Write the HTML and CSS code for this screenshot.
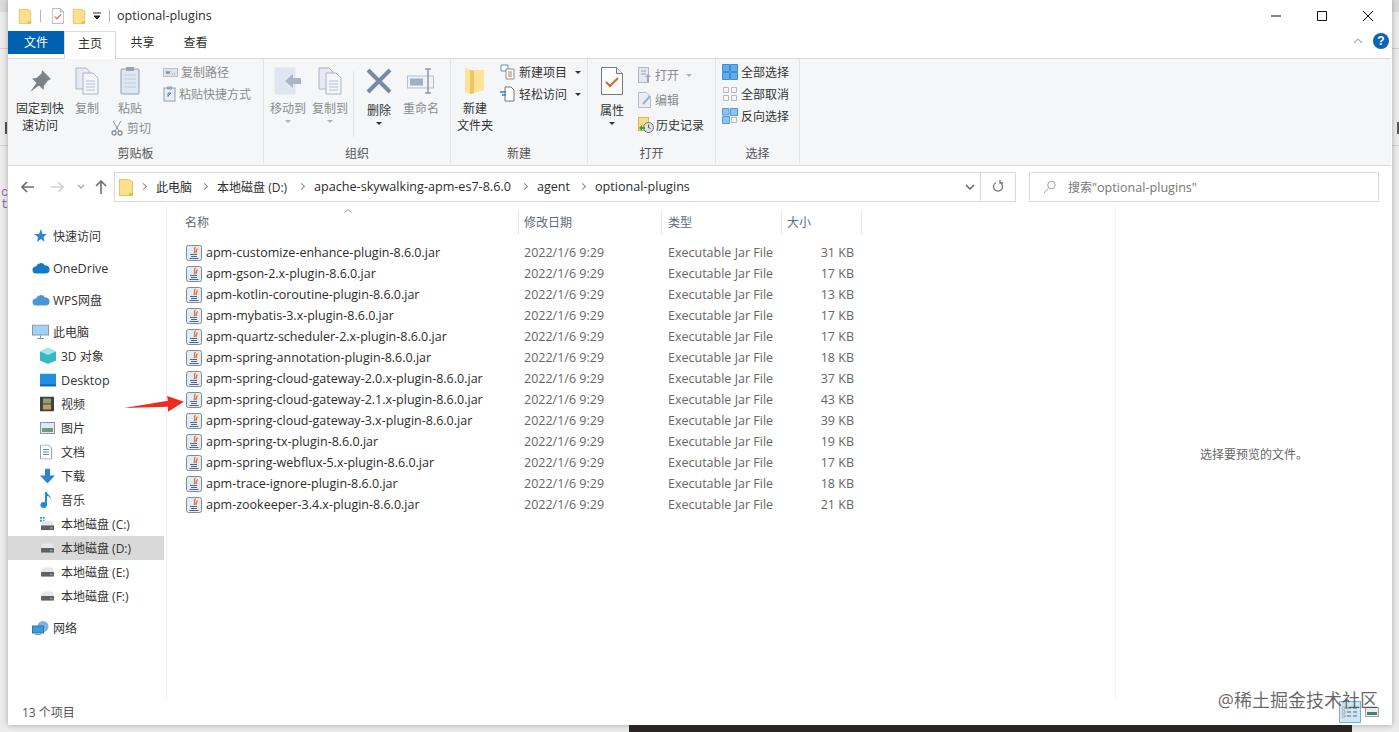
FILE: index.html
```html
<!DOCTYPE html>
<html lang="zh-CN">
<head>
  <meta charset="UTF-8" />
  <title>optional-plugins</title>
  <link rel="stylesheet" href="styles.css">
</head>
<body>

  <svg class="defs" width="0" height="0">
    <symbol id="folder" viewBox="0 0 14 18">
      <path d="M0.500 1.500h9l4 2v14h-13z" fill="#fbe08f" stroke="#e5c365"/>
      <path d="M10 15h3.500v2.500h-3.500z" fill="#e8b93e"/>
    </symbol>
    <symbol id="jar" viewBox="0 0 16 16">
      <rect x="0.500" y="0.500" width="15" height="15" rx="2" fill="#e3ebf5" stroke="#7f8a97"/>
      <path d="M9.500 2C6.500 4 10.500 5 8 8M11.500 3.500C9.500 5 11.500 6 9.800 8" fill="none" stroke="#e0702a" stroke-width="1.300"/>
      <path d="M4 9.500h7M5 11.500h6M3.500 13.500h9" stroke="#4f6785" fill="none"/>
    </symbol>
    <symbol id="drive" viewBox="0 0 16 12">
      <path d="M3 1h10l2 5H1z" fill="#e4e6e8"/>
      <rect x="1" y="6" width="14" height="5" fill="#5c6266"/>
      <rect x="11" y="8" width="2" height="1.500" fill="#7fd07f"/>
    </symbol>
    <symbol id="doc-lines" viewBox="0 0 24 28">
      <path d="M1 1h10l4 4v17H1z" fill="#e6ebf3" stroke="#a9b4c4"/>
      <path d="M8 6h10l5 5v16H8z" fill="#f2f5f9" stroke="#a9b4c4"/>
      <path d="M11 14h9M11 17h9M11 20h9M11 23h9" stroke="#b4bfce"/>
    </symbol>
    <symbol id="check-doc" viewBox="0 0 22 28">
      <path d="M0.500 0.500h15l6 6v21h-21z" fill="#fff" stroke="#777"/>
      <path d="M15.500 0.500v6h6" fill="#eee" stroke="#777"/>
      <path d="M5 15l4 4 8-8" fill="none" stroke="#e0632a" stroke-width="2"/>
    </symbol>
  </svg>

  <div class="desktop">
    <div class="backdrop">
      <span class="bd-top"></span>
      <span class="bd-line bd-l1"></span>
      <span class="bd-line bd-l2"></span>
      <span class="bd-line bd-r1"></span>
      <span class="bd-line bd-r2"></span>
      <span class="bd-char bd-c">c</span>
      <span class="bd-char bd-t">t</span>
      <span class="bd-dark bd-dl"></span>
      <span class="bd-dark bd-dr"></span>
    </div>

    <div class="window">

      <div class="titlebar">
        <svg class="qa-folder"><use href="#folder"/></svg>
        <span class="qa-sep"></span>
        <svg class="qa-check"><use href="#check-doc"/></svg>
        <svg class="qa-folder qa-folder-b"><use href="#folder"/></svg>
        <svg class="qa-more" viewBox="0 0 8 8"><path d="M0 1h8M1 4h6l-3 3z" stroke="#222" fill="#222"/></svg>
        <span class="qa-sep qa-sep-b"></span>
        <span class="title-text">optional-plugins</span>
        <div class="win-controls">
          <svg viewBox="0 0 12 12"><path d="M1 6h10" stroke="#111" fill="none"/></svg>
          <svg viewBox="0 0 12 12"><path d="M1.500 1.500h9v9h-9z" stroke="#111" fill="none"/></svg>
          <svg viewBox="0 0 12 12"><path d="M1 1l10 10M11 1L1 11" stroke="#111" fill="none"/></svg>
        </div>
      </div>

      <div class="tabs">
        <span class="tab tab-file">文件</span>
        <span class="tab tab-home">主页</span>
        <span class="tab tab-share">共享</span>
        <span class="tab tab-view">查看</span>
        <div class="tabs-right">
          <svg class="collapse" viewBox="0 0 10 6"><path d="M1 5l4-4 4 4" fill="none" stroke="#a9adb2" stroke-width="1.200"/></svg>
          <span class="help">?</span>
        </div>
      </div>

      <div class="ribbon">

        <div class="group group-clip">
          <div class="group-body">
            <div class="big big-pin">
              <div class="big-icon">
                <svg width="24" height="24" viewBox="0 0 24 24"><path d="M14 1l9 9-3 1.500-4 5-.5 4.500-4.500-4.500L2 23l6.500-9-4.500-4.500 4.500-.5 5-4.500z" fill="#7d8287"/></svg>
              </div>
              <span>固定到快</span><span>速访问</span>
            </div>
            <div class="big big-copy off">
              <div class="big-icon"><svg width="24" height="28"><use href="#doc-lines"/></svg></div>
              <span>复制</span>
            </div>
            <div class="paste-col off">
              <div class="big-icon">
                <svg width="20" height="29" viewBox="0 0 20 29"><rect x="1" y="3" width="18" height="25" rx="1" fill="#dfe7f2" stroke="#8f9fb4"/><rect x="6" y="1" width="8" height="4" fill="#9aa5b3"/><path d="M4 9h12M4 13h12M4 17h12M4 21h12" stroke="#c0cbd9"/></svg>
              </div>
              <span>粘贴</span>
              <div class="cut">
                <svg width="12" height="16" viewBox="0 0 12 16"><path d="M2 1l6 10M10 1L4 11" stroke="#8b97a6" fill="none"/><circle cx="3" cy="13" r="2" fill="none" stroke="#7f8ea3" stroke-width="1.300"/><circle cx="9" cy="13" r="2" fill="none" stroke="#7f8ea3" stroke-width="1.300"/></svg>
                <span>剪切</span>
              </div>
            </div>
            <div class="small-col small-clip off">
              <div class="small"><svg width="15" height="9" viewBox="0 0 15 9"><rect x="0.500" y="0.500" width="14" height="8" fill="#dfe3ea" stroke="#b9c0cb"/><path d="M3 3l1 3 1-3 1 3 1-3M9 6h1M11 6h1" stroke="#8a94a3" fill="none"/></svg><span>复制路径</span></div>
              <div class="small"><svg width="13" height="16" viewBox="0 0 13 16"><rect x="1" y="2" width="11" height="13" fill="#e9eef4" stroke="#8f9fb4"/><rect x="4" y="0.500" width="5" height="3" fill="#9aa5b3"/><path d="M5 11V7h3M8 7l-3 3" stroke="#4e7fb3" fill="none"/></svg><span>粘贴快捷方式</span></div>
            </div>
          </div>
          <div class="group-label">剪贴板</div>
        </div>

        <div class="group group-org">
          <div class="group-body">
            <div class="big big-move off">
              <div class="big-icon">
                <svg width="28" height="28" viewBox="0 0 28 28"><rect x="0.500" y="0.500" width="21" height="27" fill="#dfe6f1"/><path d="M11 14l8-7v4h8v6h-8v4z" fill="#a9b6c9"/></svg>
              </div>
              <span>移动到</span><i class="caret caret-off"></i>
            </div>
            <div class="big big-move off">
              <div class="big-icon"><svg width="26" height="28"><use href="#doc-lines"/></svg></div>
              <span>复制到</span><i class="caret caret-off"></i>
            </div>
            <span class="org-sep"></span>
            <div class="big big-del">
              <div class="big-icon">
                <svg width="26" height="26" viewBox="0 0 26 26"><path d="M2 2l22 22M24 2L2 24" stroke="#7a88a8" stroke-width="4" fill="none"/></svg>
              </div>
              <span>删除</span><i class="caret"></i>
            </div>
            <div class="big big-ren off">
              <div class="big-icon">
                <svg width="28" height="26" viewBox="0 0 28 26"><rect x="0.500" y="8" width="26" height="12" fill="#eef2f7" stroke="#b4bfce"/><rect x="3" y="10.500" width="13" height="7" fill="#9fb0c6"/><path d="M18 1h6M18 25h6M21 1v24" stroke="#8d99aa" stroke-width="1.500" fill="none"/></svg>
              </div>
              <span>重命名</span>
            </div>
          </div>
          <div class="group-label">组织</div>
        </div>

        <div class="group group-new">
          <div class="group-body">
            <div class="big big-newf">
              <div class="big-icon">
                <svg width="20" height="28" viewBox="0 0 20 28"><path d="M0 1l5 2h14v20l-14 4-5-2z" fill="#fbe39a"/><path d="M5 3l4 1v22l-4 1z" fill="#edc662"/></svg>
              </div>
              <span>新建</span><span>文件夹</span>
            </div>
            <div class="small-col small-new">
              <div class="small"><svg width="15" height="16" viewBox="0 0 15 16"><path d="M1 1h7v6H1z" fill="#fff" stroke="#5d90bf"/><path d="M6 5h8v10H6z" fill="#fff" stroke="#8b8f96"/><path d="M8 8h4M8 10h4M8 12h4" stroke="#c07a3a"/></svg><span>新建项目</span><i class="caret caret-side"></i></div>
              <div class="small"><svg width="15" height="16" viewBox="0 0 15 16"><path d="M5 1h6l3 3v11H5z" fill="#fff" stroke="#777"/><path d="M0 6h6M2 9h4" stroke="#2f7fbe" stroke-width="1.300"/></svg><span>轻松访问</span><i class="caret caret-side"></i></div>
            </div>
          </div>
          <div class="group-label">新建</div>
        </div>

        <div class="group group-open">
          <div class="group-body">
            <div class="big big-prop">
              <div class="big-icon"><svg width="22" height="28"><use href="#check-doc"/></svg></div>
              <span>属性</span><i class="caret"></i>
            </div>
            <div class="open-col">
              <div class="small off"><svg width="14" height="16" viewBox="0 0 14 16"><rect x="0.500" y="0.500" width="10" height="15" fill="#e4e9f0" stroke="#aeb7c3"/><path d="M3 4h5M3 7h5" stroke="#98a3b3"/><path d="M9 15v-5h-2l3-3 3 3h-2v5z" fill="#9aa7b8"/></svg><span>打开</span><i class="caret caret-side caret-off"></i></div>
              <div class="small off"><svg width="14" height="16" viewBox="0 0 14 16"><path d="M0.500 0.500h8l4 4v11h-12z" fill="#e9eef4" stroke="#b4bfce"/><path d="M5 12l7-8" stroke="#9db0c8" stroke-width="2"/></svg><span>编辑</span></div>
              <div class="small small-hist"><svg width="16" height="16" viewBox="0 0 16 16"><rect x="0.500" y="0.500" width="10" height="13" fill="#f7dc85" stroke="#d9b654"/><circle cx="10.500" cy="10.500" r="5" fill="#dfe2e5" stroke="#6e7378"/><path d="M10.500 7.500v3l2 1" stroke="#555" fill="none"/><path d="M1 11l3-3v2h3v2H4v2z" fill="#35a23a"/></svg><span>历史记录</span></div>
            </div>
          </div>
          <div class="group-label">打开</div>
        </div>

        <div class="group group-select">
          <div class="group-body">
            <div class="small-col">
              <div class="small"><svg width="16" height="16" viewBox="0 0 16 16"><path d="M.5.500h7v7h-7zM8.500.500h7v7h-7zM.5 8.500h7v7h-7zM8.500 8.500h7v7h-7z" fill="#5fadea" stroke="#3b8fcf"/></svg><span>全部选择</span></div>
              <div class="small"><svg width="16" height="16" viewBox="0 0 16 16"><path d="M1.500 1.500h5v5h-5zM9.500 1.500h5v5h-5zM1.500 9.500h5v5h-5zM9.500 9.500h5v5h-5z" fill="#f7f8f9" stroke="#b5b9bd"/></svg><span>全部取消</span></div>
              <div class="small"><svg width="16" height="16" viewBox="0 0 16 16"><path d="M9.500 9.500h5v5h-5z" fill="#f7f8f9" stroke="#b5b9bd"/><path d="M.5.500h6.500v6.500h-6.500zM8.500.5h7v7h-7zM.5 8.500h7v7h-7z" fill="#8cc4ee" stroke="#4c9ad6"/></svg><span>反向选择</span></div>
            </div>
          </div>
          <div class="group-label">选择</div>
        </div>

      </div>

      <div class="addressrow">
        <div class="nav-arrows">
          <svg width="14" height="12" viewBox="0 0 14 12"><path d="M13 6H2M6 1L1 6l5 5" fill="none" stroke="#6f6f6f" stroke-width="1.600"/></svg>
          <svg class="nav-fwd" width="14" height="12" viewBox="0 0 14 12"><path d="M1 6h11M8 1l5 5-5 5" fill="none" stroke="#d2d2d2" stroke-width="1.600"/></svg>
          <svg class="nav-drop" width="8" height="6" viewBox="0 0 8 6"><path d="M1 1l3 3 3-3" fill="none" stroke="#a5a5a5" stroke-width="1.300"/></svg>
          <svg class="nav-up" width="12" height="14" viewBox="0 0 12 14"><path d="M6 14V2M1 6l5-5 5 5" fill="none" stroke="#6f6f6f" stroke-width="1.600"/></svg>
        </div>
        <div class="address">
          <svg class="addr-folder"><use href="#folder"/></svg>
          <i class="crumb-arrow"></i><span>此电脑</span>
          <i class="crumb-arrow"></i><span class="crumb-disk">本地磁盘 (D:)</span>
          <i class="crumb-arrow"></i><span class="latin crumb-long">apache-skywalking-apm-es7-8.6.0</span>
          <i class="crumb-arrow"></i><span class="latin">agent</span>
          <i class="crumb-arrow"></i><span class="latin">optional-plugins</span>
          <svg class="addr-drop" viewBox="0 0 10 6"><path d="M1 1l4 4 4-4" fill="none" stroke="#666" stroke-width="1.500"/></svg>
          <div class="addr-refresh">
            <svg width="12" height="13" viewBox="0 0 12 13"><path d="M8 2.500a4.500 4.500 0 1 1-4 0M8 0v3h3" fill="none" stroke="#7a7a7a" stroke-width="1.300"/></svg>
          </div>
        </div>
        <div class="search">
          <svg width="13" height="14" viewBox="0 0 13 14"><circle cx="8.500" cy="5" r="3.800" fill="none" stroke="#a6a6a6"/><path d="M5.500 8L1 13" stroke="#a6a6a6" fill="none"/></svg>
          <span>搜索<span class="latin">"optional-plugins"</span></span>
        </div>
      </div>

      <div class="main">
        <nav class="sidebar">
          <div class="nav-item lvl1"><svg class="ni" width="16" height="16" viewBox="0 0 16 16"><path d="M9 1l1.500 5H15l-3.500 3 1 5L9 11l-4 3 1-5-4-3h5z" fill="#2f84d0"/></svg>快速访问</div>
          <div class="nav-item lvl1 gap"><svg class="ni" width="18" height="12" viewBox="0 0 18 12"><path d="M4 11.500a3.500 3.500 0 0 1 0-7 5 5 0 0 1 9-1 4 4 0 0 1 1 8z" fill="#1578c8"/></svg><span class="latin">OneDrive</span></div>
          <div class="nav-item lvl1 gap"><svg class="ni" width="18" height="12" viewBox="0 0 18 12"><path d="M4 11.500a3.500 3.500 0 0 1 0-7 5 5 0 0 1 9-1 4 4 0 0 1 1 8z" fill="#4b94dc"/></svg>WPS网盘</div>
          <div class="nav-item lvl1 gap"><svg class="ni" width="17" height="15" viewBox="0 0 17 15"><rect x="0.500" y="0.500" width="16" height="10" fill="#9fd3f3" stroke="#8b95a1"/><path d="M5 14h7M8.500 11v3" stroke="#8b95a1"/></svg>此电脑</div>
          <div class="nav-item lvl2"><svg class="ni" width="16" height="16" viewBox="0 0 16 16"><path d="M8 0l8 3.500v9L8 16l-8-3.500v-9z" fill="#35b8c4"/><path d="M0 3.500L8 7l8-3.500L8 0z" fill="#a5e6ee"/></svg>3D 对象</div>
          <div class="nav-item lvl2"><svg class="ni" width="16" height="13" viewBox="0 0 16 13"><rect width="16" height="13" fill="#1f8fe0"/><rect y="11" width="16" height="2" fill="#0e5fa8"/></svg><span class="latin">Desktop</span></div>
          <div class="nav-item lvl2"><svg class="ni" width="14" height="15" viewBox="0 0 14 15"><rect width="14" height="15" fill="#3d4248"/><rect x="3" y="2" width="8" height="5" fill="#8aa36a"/><rect x="3" y="8" width="8" height="5" fill="#c9a04e"/></svg>视频</div>
          <div class="nav-item lvl2"><svg class="ni" width="15" height="12" viewBox="0 0 15 12"><rect x="0.500" y="0.500" width="14" height="11" fill="#dfeaf2" stroke="#8b95a1"/><path d="M2 6h11v4H2z" fill="#6f9a86"/></svg>图片</div>
          <div class="nav-item lvl2"><svg class="ni" width="12" height="15" viewBox="0 0 12 15"><path d="M0.500 0.500h8l3 3v11h-11z" fill="#fff" stroke="#9aa3ad"/><path d="M3 5h6M3 7.500h6M3 10h6" stroke="#4d8fc9"/></svg>文档</div>
          <div class="nav-item lvl2"><svg class="ni" width="15" height="15" viewBox="0 0 15 15"><path d="M5 0h5v7h5l-7.500 8L0 7h5z" fill="#2f84d0"/></svg>下载</div>
          <div class="nav-item lvl2"><svg class="ni" width="12" height="16" viewBox="0 0 12 16"><path d="M5 0h2c0 3 4 3 4 7-1-2-2-3-4-3v9a3.300 3 0 1 1-2-2.700z" fill="#1a8fdd"/></svg>音乐</div>
          <div class="nav-item lvl2"><svg class="ni" width="15" height="14" viewBox="0 0 16 15"><path d="M0 0h2v2H0zM3 0h2v2H3zM0 3h2v2H0zM3 3h2v2H3z" fill="#1aa3cf"/><svg y="3" width="16" height="12"><use href="#drive"/></svg></svg>本地磁盘 (C:)</div>
          <div class="nav-item lvl2 selected"><svg class="ni" width="15" height="11"><use href="#drive"/></svg>本地磁盘 (D:)</div>
          <div class="nav-item lvl2"><svg class="ni" width="15" height="11"><use href="#drive"/></svg>本地磁盘 (E:)</div>
          <div class="nav-item lvl2"><svg class="ni" width="15" height="11"><use href="#drive"/></svg>本地磁盘 (F:)</div>
          <div class="nav-item lvl1 gap"><svg class="ni" width="17" height="15" viewBox="0 0 17 15"><circle cx="11" cy="6" r="5.500" fill="#7fb2dc"/><rect x="0.500" y="5.500" width="11" height="7" fill="#3b9ad9" stroke="#2a76ad"/><path d="M3 14h6" stroke="#8b95a1"/></svg>网络</div>
        </nav>

        <section class="files">
          <svg class="sort-up" viewBox="0 0 8 4"><path d="M0.500 3.500L4 0.500l3.500 3" fill="none" stroke="#9a9a9a"/></svg>
          <div class="file-head">
            <span class="col-name">名称</span>
            <span class="col-date">修改日期</span>
            <span class="col-type">类型</span>
            <span class="col-size">大小</span>
          </div>
          <div class="file-row"><span class="col-name"><svg width="16" height="16"><use href="#jar"/></svg>apm-customize-enhance-plugin-8.6.0.jar</span><span class="col-date">2022/1/6 9:29</span><span class="col-type">Executable Jar File</span><span class="col-size">31 KB</span></div>
          <div class="file-row"><span class="col-name"><svg width="16" height="16"><use href="#jar"/></svg>apm-gson-2.x-plugin-8.6.0.jar</span><span class="col-date">2022/1/6 9:29</span><span class="col-type">Executable Jar File</span><span class="col-size">17 KB</span></div>
          <div class="file-row"><span class="col-name"><svg width="16" height="16"><use href="#jar"/></svg>apm-kotlin-coroutine-plugin-8.6.0.jar</span><span class="col-date">2022/1/6 9:29</span><span class="col-type">Executable Jar File</span><span class="col-size">13 KB</span></div>
          <div class="file-row"><span class="col-name"><svg width="16" height="16"><use href="#jar"/></svg>apm-mybatis-3.x-plugin-8.6.0.jar</span><span class="col-date">2022/1/6 9:29</span><span class="col-type">Executable Jar File</span><span class="col-size">17 KB</span></div>
          <div class="file-row"><span class="col-name"><svg width="16" height="16"><use href="#jar"/></svg>apm-quartz-scheduler-2.x-plugin-8.6.0.jar</span><span class="col-date">2022/1/6 9:29</span><span class="col-type">Executable Jar File</span><span class="col-size">17 KB</span></div>
          <div class="file-row"><span class="col-name"><svg width="16" height="16"><use href="#jar"/></svg>apm-spring-annotation-plugin-8.6.0.jar</span><span class="col-date">2022/1/6 9:29</span><span class="col-type">Executable Jar File</span><span class="col-size">18 KB</span></div>
          <div class="file-row"><span class="col-name"><svg width="16" height="16"><use href="#jar"/></svg>apm-spring-cloud-gateway-2.0.x-plugin-8.6.0.jar</span><span class="col-date">2022/1/6 9:29</span><span class="col-type">Executable Jar File</span><span class="col-size">37 KB</span></div>
          <div class="file-row"><span class="col-name"><svg width="16" height="16"><use href="#jar"/></svg>apm-spring-cloud-gateway-2.1.x-plugin-8.6.0.jar</span><span class="col-date">2022/1/6 9:29</span><span class="col-type">Executable Jar File</span><span class="col-size">43 KB</span></div>
          <div class="file-row"><span class="col-name"><svg width="16" height="16"><use href="#jar"/></svg>apm-spring-cloud-gateway-3.x-plugin-8.6.0.jar</span><span class="col-date">2022/1/6 9:29</span><span class="col-type">Executable Jar File</span><span class="col-size">39 KB</span></div>
          <div class="file-row"><span class="col-name"><svg width="16" height="16"><use href="#jar"/></svg>apm-spring-tx-plugin-8.6.0.jar</span><span class="col-date">2022/1/6 9:29</span><span class="col-type">Executable Jar File</span><span class="col-size">19 KB</span></div>
          <div class="file-row"><span class="col-name"><svg width="16" height="16"><use href="#jar"/></svg>apm-spring-webflux-5.x-plugin-8.6.0.jar</span><span class="col-date">2022/1/6 9:29</span><span class="col-type">Executable Jar File</span><span class="col-size">17 KB</span></div>
          <div class="file-row"><span class="col-name"><svg width="16" height="16"><use href="#jar"/></svg>apm-trace-ignore-plugin-8.6.0.jar</span><span class="col-date">2022/1/6 9:29</span><span class="col-type">Executable Jar File</span><span class="col-size">18 KB</span></div>
          <div class="file-row"><span class="col-name"><svg width="16" height="16"><use href="#jar"/></svg>apm-zookeeper-3.4.x-plugin-8.6.0.jar</span><span class="col-date">2022/1/6 9:29</span><span class="col-type">Executable Jar File</span><span class="col-size">21 KB</span></div>

          <svg class="red-arrow" width="62" height="18" viewBox="0 0 62 18"><path d="M0 13L44 5.700 43 1l17 5.700L44 16.700v-5z" fill="#f22a1c"/></svg>
        </section>

        <aside class="preview">选择要预览的文件。</aside>
      </div>

      <div class="statusbar">
        <span>13 个项目</span>
        <div class="view-btns">
          <span class="view-btn view-on">
            <svg width="16" height="14" viewBox="0 0 16 14"><path d="M0 2h3v2H0zM0 6h3v2H0zM0 10h3v2H0z" fill="#fff" stroke="#777" stroke-width=".6"/><path d="M5 3h4M11 3h4M5 7h4M11 7h4M5 11h4M11 11h4" stroke="#666"/></svg>
          </span>
          <span class="view-btn">
            <svg width="14" height="10" viewBox="0 0 14 10"><rect x="0.500" y="0.500" width="13" height="9" fill="#e3edf2" stroke="#9aa3ad"/><path d="M2 5h10v3H2z" fill="#4f7a6c"/></svg>
          </span>
        </div>
      </div>

      <div class="watermark">@稀土掘金技术社区</div>
    </div>
    <div class="under-strip"></div>
  </div>

</body>
</html>
```

FILE: styles.css
```css
* {
  margin: 0;
  padding: 0;
  box-sizing: border-box;
}

body {
  background: #ececed;
  font-family: "Open Sans", "Noto Sans CJK SC", sans-serif;
  font-size: 12px;
  color: #333;
  overflow: hidden;
}

.defs {
  position: absolute;
}

.latin {
  font-size: 12.6px;
}

.desktop {
  height: 732px;
  padding: 0 7px 0 8px;
  display: flex;
  flex-direction: column;
}

/* what shows of the page behind the window */
.backdrop {
  position: absolute;
  inset: 0;
  overflow: hidden;
}

.backdrop span {
  position: absolute;
}

.bd-top {
  left: 0;
  right: 0;
  top: 0;
  height: 12px;
  background: #dcdcdd;
}

.bd-line {
  height: 1px;
  background: #d2d2d3;
  width: 8px;
}

.bd-l1 {
  left: 0;
  top: 48px;
}

.bd-l2 {
  left: 0;
  top: 145px;
}

.bd-r1 {
  right: 0;
  top: 48px;
}

.bd-r2 {
  right: 0;
  top: 145px;
}

.bd-char {
  left: 1px;
  color: #9a5fb0;
  font: 12px/14px "Liberation Mono", monospace;
}

.bd-c {
  top: 186px;
}

.bd-t {
  top: 198px;
}

.bd-dark {
  width: 2px;
  height: 12px;
  background: #555;
  top: 122px;
}

.bd-dl {
  left: 5px;
}

.bd-dr {
  right: 0;
}

.window {
  position: relative;
  height: 725px;
  background: #fff;
  box-shadow: 0 0 6px rgba(0, 0, 0, 0.3);
  display: flex;
  flex-direction: column;
}

.under-strip {
  position: relative;
  height: 7px;
  margin-left: 621px;
  margin-right: 40px;
  background: #2a2522;
}

/* title bar */
.titlebar {
  height: 31px;
  display: flex;
  align-items: center;
  padding-left: 10px;
  flex: none;
}

.qa-folder {
  width: 14px;
  height: 16px;
}

.qa-folder-b {
  margin-left: 8px;
}

.qa-sep {
  width: 1px;
  height: 12px;
  background: #b5b5b5;
  margin: 0 11px 0 8px;
}

.qa-sep-b {
  margin: 0 7px 0 8px;
}

.qa-check {
  width: 12px;
  height: 16px;
}

.qa-more {
  width: 8px;
  height: 8px;
  margin-left: 7px;
}

.title-text {
  font-size: 12.6px;
  color: #2d2d2d;
}

.win-controls {
  margin-left: auto;
  display: flex;
  gap: 34px;
  padding-right: 18px;
}

.win-controls svg {
  width: 12px;
  height: 12px;
}

/* tabs */
.tabs {
  height: 27px;
  display: flex;
  flex: none;
  align-items: flex-start;
  color: #2f2f2f;
}

.tab {
  height: 23px;
  line-height: 23px;
  text-align: center;
}

.tab-file {
  width: 56px;
  background: #0061b0;
  color: #fff;
}

.tab-home {
  width: 52px;
  height: 28px;
  line-height: 23px;
  background: #fff;
  border: 1px solid #dadbdc;
  border-bottom: none;
  position: relative;
  z-index: 1;
}

.tab-share {
  width: 53px;
}

.tab-view {
  width: 53px;
}

.tabs-right {
  margin-left: auto;
  display: flex;
  align-items: center;
  height: 20px;
  gap: 10px;
  padding-right: 3px;
}

.collapse {
  width: 10px;
  height: 6px;
}

.help {
  width: 16px;
  height: 16px;
  border-radius: 50%;
  background: #0b64b5;
  color: #fff;
  font: bold 12px/16px "Liberation Sans", sans-serif;
  text-align: center;
}

/* ribbon */
.ribbon {
  height: 108px;
  flex: none;
  display: flex;
  background: #f4f6f7;
  border-top: 1px solid #dadbdc;
  border-bottom: 1px solid #d9dadb;
  margin-right: 1px;
}

.group {
  display: flex;
  flex-direction: column;
  border-right: 1px solid #e2e4e6;
  margin-bottom: 1px;
}

.group-clip {
  width: 256px;
}

.group-org {
  width: 187px;
}

.group-new {
  width: 137px;
}

.group-open {
  width: 128px;
}

.group-select {
  width: 84px;
}

.group-body {
  flex: 1;
  display: flex;
  padding-top: 2px;
}

.group-label {
  height: 22px;
  line-height: 24px;
  text-align: center;
  color: #555;
}

.off {
  color: #8c8c8c;
}

.big,
.paste-col {
  display: flex;
  flex-direction: column;
  align-items: center;
  line-height: 17px;
}

.big-icon {
  height: 39px;
  display: flex;
  align-items: center;
  justify-content: center;
  flex: none;
}

.big-pin {
  width: 48px;
  margin-left: 8px;
  color: #333;
}

.big-copy {
  width: 46px;
}

.paste-col {
  width: 40px;
  margin-right: 12px;
}

.cut {
  display: flex;
  align-items: center;
  gap: 4px;
  height: 22px;
  margin-left: 2px;
  white-space: nowrap;
}

.small-col {
  display: flex;
  flex-direction: column;
}

.small-clip {
  margin-left: 1px;
}

.small {
  height: 22px;
  display: flex;
  align-items: center;
  gap: 3px;
  white-space: nowrap;
}

.small svg {
  flex: none;
}

.big-move {
  width: 42px;
}

.big-move:first-child {
  margin-left: 3px;
}

.org-sep {
  width: 1px;
  height: 66px;
  background: #e2e4e6;
  margin: 10px 3px 0 2px;
}

.big-del {
  width: 44px;
  color: #333;
}

.big-del span,
.big-prop span {
  margin-top: 2px;
}

.big-ren {
  width: 40px;
}

.caret {
  width: 0;
  height: 0;
  margin-top: 3px;
  border: 3px solid transparent;
  border-top: 3px solid #333;
  border-bottom: none;
}

.caret-off {
  border-top-color: #b0b0b0;
}

.caret-side {
  margin: 0 0 0 4px;
}

.big-newf {
  width: 48px;
}

.small-new {
  margin-left: 1px;
}

.small-new .small {
  gap: 4px;
}

.big-prop {
  width: 48px;
}

.open-col {
  display: flex;
  flex-direction: column;
  gap: 3px;
  padding-top: 3px;
  margin-left: 2px;
}

.small-hist {
  gap: 2px;
}

.group-select .small-col {
  margin-left: 6px;
}

/* address row */
.addressrow {
  height: 41px;
  flex: none;
  display: flex;
  align-items: center;
  padding-left: 13px;
  padding-right: 13px;
  color: #2d2d2d;
}

.nav-arrows {
  width: 93px;
  display: flex;
  align-items: center;
}

.nav-fwd {
  margin-left: 15px;
}

.nav-drop {
  margin-left: 13px;
}

.nav-up {
  margin-left: 10px;
}

.address {
  width: 902px;
  height: 30px;
  border: 1px solid #d9dadb;
  display: flex;
  align-items: center;
  padding-left: 4px;
}

.addr-folder {
  width: 14px;
  height: 18px;
  margin-right: 3px;
}

.crumb-arrow {
  width: 5px;
  height: 5px;
  border-top: 1px solid #888;
  border-right: 1px solid #888;
  transform: rotate(45deg);
  margin: 0 10px 0 5px;
}

.address > span {
  margin-right: 5px;
}

.address > .crumb-disk {
  margin-right: 7px;
}

.address > .crumb-long {
  margin-right: 6px;
}

.addr-drop {
  width: 10px;
  height: 6px;
  margin-left: auto;
  margin-right: 5px;
}

.addr-refresh {
  width: 35px;
  height: 28px;
  border-left: 1px solid #d9dadb;
  display: flex;
  align-items: center;
  justify-content: center;
}

.search {
  flex: 1;
  margin-left: 13px;
  height: 30px;
  border: 1px solid #d9dadb;
  display: flex;
  align-items: center;
  gap: 12px;
  padding-left: 13px;
  color: #777;
}

/* main area */
.main {
  flex: 1;
  display: flex;
  min-height: 0;
  position: relative;
}

.sidebar {
  width: 159px;
  border-right: 1px solid #f0f0f0;
  padding-top: 17px;
  flex: none;
  margin-bottom: 25px;
}

.nav-item {
  height: 24px;
  display: flex;
  align-items: center;
  color: #333;
  width: 156px;
  white-space: nowrap;
  position: relative;
}

.lvl1 {
  padding-left: 45px;
}

.lvl2 {
  padding-left: 53px;
}

.gap {
  margin-top: 8px;
}

.ni {
  position: absolute;
  top: 50%;
  transform: translateY(-50%);
  left: 24px;
}

.lvl2 .ni {
  left: 32px;
}

.selected {
  background: #d9d9d9;
}

.files {
  width: 949px;
  flex: none;
  position: relative;
  border-right: 1px solid #f3f3f3;
  margin-bottom: 25px;
}

.sort-up {
  position: absolute;
  left: 177px;
  top: 2px;
  width: 8px;
  height: 4px;
}

.file-head {
  display: flex;
  height: 30px;
  align-items: center;
  color: #5d6b7a;
  margin-bottom: 5px;
}

.file-head span {
  height: 25px;
  line-height: 25px;
  border-right: 1px solid #e5e5e5;
  padding-left: 18px;
}

.file-head .col-name {
  width: 352px;
}

.file-head .col-date {
  width: 143px;
  padding-left: 5px;
}

.file-head .col-type {
  width: 120px;
  padding-left: 6px;
}

.file-head .col-size {
  width: 80px;
  padding-left: 5px;
  text-align: left;
}

.file-row {
  display: flex;
  height: 21px;
  align-items: center;
  font-size: 12.5px;
  color: #666;
  white-space: nowrap;
}

.file-row .col-name {
  width: 357px;
  padding-left: 19px;
  display: flex;
  align-items: center;
  gap: 4px;
  color: #2d2d2d;
}

.file-row .col-date {
  width: 144px;
}

.file-row .col-type {
  width: 120px;
}

.file-row .col-size {
  width: 66px;
  text-align: right;
}

.red-arrow {
  position: absolute;
  left: -43px;
  top: 188px;
}

.preview {
  flex: 1;
  display: flex;
  align-items: center;
  justify-content: center;
  color: #666;
  margin-bottom: 25px;
}

/* status bar */
.statusbar {
  position: absolute;
  left: 0;
  right: 0;
  bottom: 1px;
  height: 25px;
  display: flex;
  align-items: center;
  padding-left: 14px;
  color: #555;
}

.view-btns {
  margin-left: auto;
  display: flex;
  align-items: center;
  padding-right: 9px;
}

.view-btn {
  width: 22px;
  height: 22px;
  display: flex;
  align-items: center;
  justify-content: center;
}

.view-on {
  background: #cde6f7;
  border: 1px solid #6fb2dc;
}

.watermark {
  position: absolute;
  right: 14px;
  bottom: 13px;
  font-size: 18px;
  color: rgba(60, 60, 60, 0.78);
}
```
